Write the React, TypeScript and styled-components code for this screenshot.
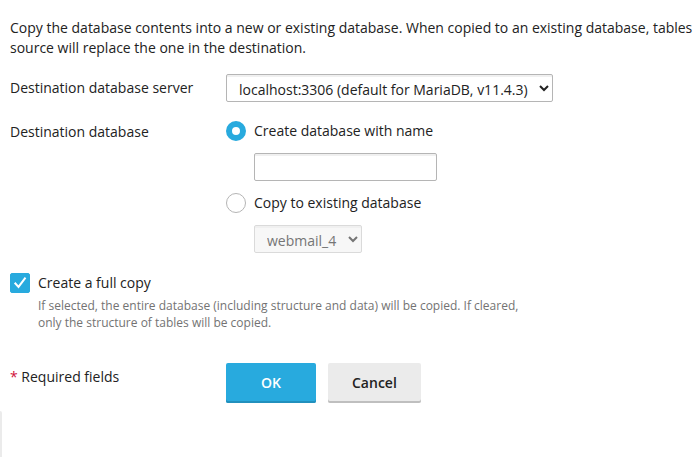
import React, { useState } from "react";
import styled, { createGlobalStyle } from "styled-components";

const GlobalStyle = createGlobalStyle`
  *, *::before, *::after { box-sizing: border-box; }
  body {
    margin: 0;
    background: #fff;
    color: #222;
    font: 14px/20px "Open Sans", sans-serif;
  }
`;

const Page = styled.div`
  display: flex;
  flex-direction: column;
  min-height: 100vh;
`;

const Form = styled.form`
  padding: 18px 0 8px 10px;
`;

const Intro = styled.p`
  margin: 0 0 16px;
`;

const Row = styled.div<{ $gap: number }>`
  display: grid;
  grid-template-columns: 216px minmax(0, 1fr);
  align-items: start;
  margin-bottom: ${(p) => p.$gap}px;
`;

const RowLabel = styled.label`
  padding-top: 4px;
`;

const GroupLabel = styled.span`
  padding-top: 1px;
`;

const Select = styled.select`
  justify-self: start;
  height: 28px;
  padding: 3px 8px 0;
  border: 1px solid #b5b5b5;
  border-radius: 2px;
  background: #fff;
  box-shadow: inset 0 2px 0 #f0f0f0;
  color: #222;
  font: inherit;

  &:disabled {
    border-color: #dadada;
    background: #f7f7f7;
    color: #757575;
    opacity: 1;
  }
`;

const TextInput = styled.input`
  width: 183px;
  height: 28px;
  padding: 3px 8px;
  border: 1px solid #b5b5b5;
  border-radius: 2px;
  box-shadow: inset 0 2px 0 #f0f0f0;
  color: #222;
  font: inherit;
`;

const Options = styled.div`
  display: flex;
  flex-direction: column;
  gap: 12px;
`;

const Choice = styled.label`
  display: flex;
  gap: 8px;
`;

const Nested = styled.div`
  display: flex;
  padding-left: 28px;
`;

const Radio = styled.input.attrs({ type: "radio" })`
  appearance: none;
  flex: none;
  width: 20px;
  height: 20px;
  margin: 0;
  border: 1px solid #b5b5b5;
  border-radius: 50%;
  background: #fff;

  &:checked {
    border: 6px solid #28aade;
  }
`;

const CheckWrap = styled.span`
  display: grid;
  flex: none;
  width: 20px;
  height: 20px;

  > * {
    grid-area: 1 / 1;
  }
`;

const Checkbox = styled.input.attrs({ type: "checkbox" })`
  appearance: none;
  width: 20px;
  height: 20px;
  margin: 0;
  border: 1px solid #b5b5b5;
  border-radius: 2px;
  background: #fff;

  &:checked {
    border-color: #28aade;
    background: #28aade;
  }
  & + svg {
    visibility: hidden;
    pointer-events: none;
  }
  &:checked + svg {
    visibility: visible;
  }
`;

const Hint = styled.p`
  max-width: 520px;
  margin: 4px 0 32px;
  padding-left: 28px;
  color: #737373;
  font-size: 12px;
  line-height: 17px;
`;

const Required = styled.span`
  padding-top: 4px;
`;

const Star = styled.span`
  color: #d0103a;
`;

const Buttons = styled.div`
  display: flex;
  gap: 12px;
`;

const Button = styled.button<{ $primary?: boolean }>`
  min-width: 90px;
  height: 40px;
  padding: 0 24px;
  border: 0;
  border-radius: 2px;
  background: ${(p) => (p.$primary ? "#28aade" : "#ebebeb")};
  box-shadow: inset 0 -2px 0 ${(p) => (p.$primary ? "#2290bd" : "#bfbfbf")};
  color: ${(p) => (p.$primary ? "#fff" : "#222")};
  font: 600 14px/20px "Open Sans", sans-serif;
`;

const PanelEdge = styled.div`
  flex: 1;
  width: 2px;
  border-top-right-radius: 2px;
  background: #ebebeb;
`;

export default function App() {
  const [mode, setMode] = useState("new");
  const [full, setFull] = useState(true);

  return (
    <Page>
      <GlobalStyle />
      <Form onSubmit={(e) => e.preventDefault()}>
        <Intro>
          Copy the database contents into a new or existing database. When copied to an existing database, tables source
          will replace the one in the destination.
        </Intro>

        <Row $gap={19}>
          <RowLabel htmlFor="server">Destination database server</RowLabel>
          <Select id="server">
            <option>localhost:3306 (default for MariaDB, v11.4.3)</option>
          </Select>
        </Row>

        <Row $gap={20} role="radiogroup" aria-labelledby="destination">
          <GroupLabel id="destination">Destination database</GroupLabel>
          <Options>
            <Choice>
              <Radio name="mode" checked={mode === "new"} onChange={() => setMode("new")} />
              Create database with name
            </Choice>
            <Nested>
              <TextInput type="text" aria-label="Create database with name" disabled={mode !== "new"} />
            </Nested>
            <Choice>
              <Radio name="mode" checked={mode === "existing"} onChange={() => setMode("existing")} />
              Copy to existing database
            </Choice>
            <Nested>
              <Select aria-label="Copy to existing database" disabled={mode !== "existing"}>
                <option>webmail_4</option>
              </Select>
            </Nested>
          </Options>
        </Row>

        <Choice>
          <CheckWrap>
            <Checkbox checked={full} onChange={(e) => setFull(e.target.checked)} aria-describedby="full-hint" />
            <svg width="20" height="20" viewBox="0 0 20 20" fill="none" stroke="#fff" strokeWidth="2" aria-hidden="true">
              <path d="M4.7 9.8 8.5 13.9 15.5 4.6" />
            </svg>
          </CheckWrap>
          Create a full copy
        </Choice>
        <Hint id="full-hint">
          If selected, the entire database (including structure and data) will be copied. If cleared, only the structure
          of tables will be copied.
        </Hint>

        <Row $gap={0}>
          <Required>
            <Star>*</Star> Required fields
          </Required>
          <Buttons>
            <Button type="submit" $primary>
              OK
            </Button>
            <Button type="button">Cancel</Button>
          </Buttons>
        </Row>
      </Form>
      <PanelEdge />
    </Page>
  );
}
